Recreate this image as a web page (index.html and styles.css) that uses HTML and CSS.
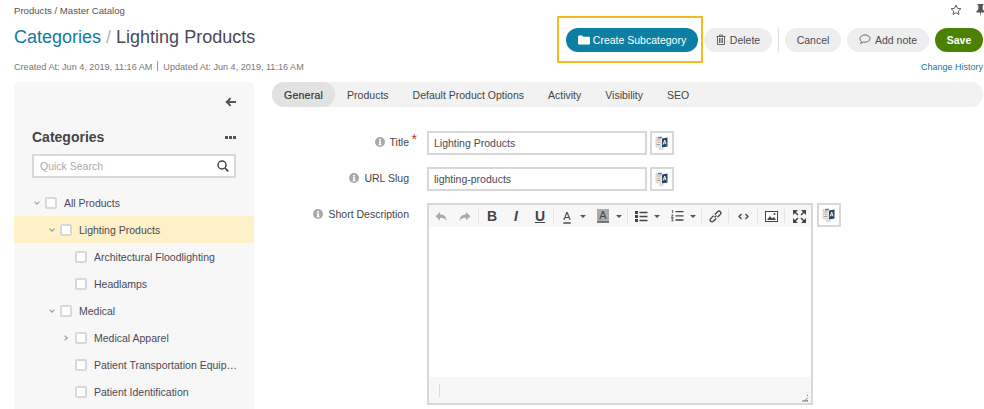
FILE: index.html
```html
<!DOCTYPE html>
<html lang="en">
<head>
    <meta charset="UTF-8">
    <title>Lighting Products</title>
    <link rel="stylesheet" href="styles.css">
</head>
<body>
    <!-- Icon sprite -->
    <svg class="sprite" width="0" height="0">
        <symbol id="i-book" viewBox="0 0 14 14">
            <path d="M1 1.500l5 1v9l-5-1z" fill="#ece8e2" stroke="#c9bba8" stroke-width=".6"/>
            <path d="M2 4h3M2.500 6.500h2.500" stroke="#d59a63" stroke-width=".9"/>
            <path d="M2 8.500h3" stroke="#7d9cc0" stroke-width=".9"/>
            <path d="M3 .8h4v1.500h-4z" fill="#4f80b5"/>
            <path d="M7 2.500l5.500-1v9l-5.500 1z" fill="#2a4568"/>
            <path d="M8.200 8.500l1.500-4.500 1.400 4.300M8.800 7h1.800" fill="none" stroke="#fff" stroke-width=".9"/>
            <path d="M4 13h4.500" stroke="#b8b8b8" stroke-width="1"/>
        </symbol>
        <symbol id="i-info" viewBox="0 0 10 10">
            <circle cx="5" cy="5" r="5" fill="#a9a9a9"/>
            <path d="M4 2h2v1.500h-2zM3.800 4.300h2.200v3h.6v.9h-3v-.9h.7v-2.100h-.5z" fill="#fff"/>
        </symbol>
    </svg>

    <header class="page-header">
        <div class="header-left">
            <div class="breadcrumb">Products / Master Catalog</div>
            <h1 class="page-title"><a class="title-link">Categories</a> <span class="title-sep">/</span> Lighting Products</h1>
            <div class="meta">Created At: Jun 4, 2019, 11:16 AM<span class="meta-sep"></span>Updated At: Jun 4, 2019, 11:16 AM</div>
        </div>
        <div class="header-right">
            <div class="top-icons">
                <svg width="12" height="12" viewBox="0 0 14 14"><path d="M7 1.300l1.700 3.700 4 .5-3 2.700.8 4-3.500-2-3.500 2 .8-4-3-2.700 4-.5z" fill="none" stroke="#555" stroke-width="1.100"/></svg>
                <svg width="9" height="13" viewBox="0 0 9 13"><path d="M1.500 0h6v1.200h-.8v4.300l1.800 1.800v1.200h-3.500l-.5 4.500-.5-4.500h-3.500v-1.200l1.800-1.800v-4.300h-.8z" fill="#555"/></svg>
            </div>
            <div class="actions">
                <div class="highlight">
                    <button class="btn btn-primary">
                        <svg width="12" height="10" viewBox="0 0 13 11"><path d="M0 1.500a1 1 0 0 1 1-1h3.500l1.200 1.500h6.300a1 1 0 0 1 1 1v6.500a1 1 0 0 1-1 1h-11a1 1 0 0 1-1-1z" fill="#fff"/></svg>
                        Create Subcategory
                    </button>
                </div>
                <button class="btn btn-delete">
                    <svg width="10" height="11" viewBox="0 0 10 11"><path d="M.5 2.500h9M3.500 2.500v-1.500h3v1.500M1.500 2.500v8h7v-8M3.500 4v5M5 4v5M6.500 4v5" fill="none" stroke="#555" stroke-width=".9"/></svg>
                    Delete
                </button>
                <span class="actions-sep"></span>
                <button class="btn btn-cancel">Cancel</button>
                <button class="btn btn-note">
                    <svg width="12" height="11" viewBox="0 0 13 12"><path d="M6.500 1c3 0 5.500 1.800 5.500 4s-2.500 4-5.500 4c-.7 0-1.300-.1-1.900-.2-.8.8-2 1.400-3.100 1.400.6-.6 1-1.300 1.100-2.100-1-.7-1.600-1.900-1.600-3.100 0-2.200 2.500-4 5.500-4z" fill="none" stroke="#555" stroke-width=".9"/></svg>
                    Add note
                </button>
                <button class="btn btn-save">Save</button>
            </div>
            <a class="history-link">Change History</a>
        </div>
    </header>

    <div class="page-body">
        <!-- Category tree -->
        <aside class="sidebar">
            <div class="sidebar-top">
                <svg width="11" height="10" viewBox="0 0 11 10"><path d="M5 .500l1.300 1.300-2 2.200h6.700v2h-6.700l2 2.200-1.300 1.300-4.700-4.500z" fill="#555"/></svg>
            </div>
            <div class="sidebar-head">
                <h2>Categories</h2>
                <span class="dots"><i></i><i></i><i></i></span>
            </div>
            <div class="search-box">
                <span>Quick Search</span>
                <svg width="12" height="12" viewBox="0 0 12 12"><circle cx="5" cy="5" r="4" fill="none" stroke="#444" stroke-width="1.500"/><path d="M8 8l3.300 3.300" stroke="#444" stroke-width="1.700"/></svg>
            </div>
            <ul class="tree">
                <li class="node level-0"><span class="chev open"></span><span class="check"></span><span class="node-name">All Products</span></li>
                <li class="node level-1 selected"><span class="chev open"></span><span class="check"></span><span class="node-name">Lighting Products</span></li>
                <li class="node level-2"><span class="chev none"></span><span class="check"></span><span class="node-name">Architectural Floodlighting</span></li>
                <li class="node level-2"><span class="chev none"></span><span class="check"></span><span class="node-name">Headlamps</span></li>
                <li class="node level-1"><span class="chev open"></span><span class="check"></span><span class="node-name">Medical</span></li>
                <li class="node level-2"><span class="chev closed"></span><span class="check"></span><span class="node-name">Medical Apparel</span></li>
                <li class="node level-2"><span class="chev none"></span><span class="check"></span><span class="node-name">Patient Transportation Equip…</span></li>
                <li class="node level-2"><span class="chev none"></span><span class="check"></span><span class="node-name">Patient Identification</span></li>
            </ul>
        </aside>

        <main class="content">
            <nav class="tabs">
                <a class="tab active">General</a>
                <a class="tab">Products</a>
                <a class="tab">Default Product Options</a>
                <a class="tab">Activity</a>
                <a class="tab">Visibility</a>
                <a class="tab">SEO</a>
            </nav>

            <form class="form">
                <div class="form-row">
                    <label class="form-label"><svg width="10" height="10"><use href="#i-info"/></svg>Title<span class="required">*</span></label>
                    <input class="text-input" type="text" value="Lighting Products">
                    <button type="button" class="translate-btn"><svg width="14" height="14"><use href="#i-book"/></svg></button>
                </div>
                <div class="form-row">
                    <label class="form-label"><svg width="10" height="10"><use href="#i-info"/></svg>URL Slug</label>
                    <input class="text-input" type="text" value="lighting-products">
                    <button type="button" class="translate-btn"><svg width="14" height="14"><use href="#i-book"/></svg></button>
                </div>
                <div class="form-row">
                    <label class="form-label"><svg width="10" height="10"><use href="#i-info"/></svg>Short Description</label>
                    <div class="editor">
                        <div class="toolbar">
                            <span class="tool"><svg width="12" height="11" viewBox="0 0 12 11"><path d="M5 1v2.500c4 0 6.300 2 6.500 6.500-1.200-2.500-3-3.300-6.500-3.300v2.800l-4.500-4.300z" fill="#aaa"/></svg></span>
                            <span class="tool"><svg width="12" height="11" viewBox="0 0 12 11"><path d="M7 1v2.500c-4 0-6.300 2-6.500 6.500 1.200-2.500 3-3.300 6.500-3.300v2.800l4.500-4.300z" fill="#aaa"/></svg></span>
                            <span class="tool-sep"></span>
                            <span class="tool tool-text bold">B</span>
                            <span class="tool tool-text italic">I</span>
                            <span class="tool tool-text underline">U</span>
                            <span class="tool-sep"></span>
                            <span class="tool-split"><span class="tool tool-text color-a">A</span><span class="caret"></span></span>
                            <span class="tool-split"><span class="tool tool-text back-a">A</span><span class="caret"></span></span>
                            <span class="tool-sep"></span>
                            <span class="tool-split"><span class="tool"><svg width="13" height="11" viewBox="0 0 13 11"><path d="M0 0h3v3h-3zM0 4h3v3h-3zM0 8h3v3h-3z" fill="#444"/><path d="M4.500 1.500h8M4.500 5.500h8M4.500 9.500h8" stroke="#444" stroke-width="1.300"/></svg></span><span class="caret"></span></span>
                            <span class="tool-split"><span class="tool"><svg width="13" height="12" viewBox="0 0 13 12"><path d="M.7.700l1-.5v3M.3 5h2l-2 2.400h2.200M.3 8.700h2l-1 1 1 1.200h-2" fill="none" stroke="#444" stroke-width=".8"/><path d="M4.500 1.700h8M4.500 5.800h8M4.500 10h8" stroke="#444" stroke-width="1.300"/></svg></span><span class="caret"></span></span>
                            <span class="tool-sep"></span>
                            <span class="tool"><svg width="13" height="13" viewBox="0 0 13 13"><path d="M5.500 7.500l2-2M4.500 5.800l-2.800 2.800a1.800 1.800 0 0 0 2.700 2.700l2.800-2.800M8.500 7.200l2.800-2.800a1.800 1.800 0 0 0-2.700-2.700l-2.800 2.800" fill="none" stroke="#444" stroke-width="1.300"/></svg></span>
                            <span class="tool-sep"></span>
                            <span class="tool tool-wide"><svg width="11" height="7" viewBox="0 0 11 7"><path d="M3.500 1l-2.500 2.500 2.500 2.500M7.500 1l2.500 2.500-2.500 2.500" fill="none" stroke="#444" stroke-width="1.300"/></svg></span>
                            <span class="tool-sep"></span>
                            <span class="tool"><svg width="13" height="11" viewBox="0 0 13 11"><path d="M0 0h13v11h-13z" fill="#444"/><path d="M1 1h11v9h-11z" fill="#fff"/><path d="M2 9l3-4 2 2.500 2-1.500 2 3z" fill="#444"/><circle cx="9.500" cy="3" r="1" fill="#444"/></svg></span>
                            <span class="tool-sep"></span>
                            <span class="tool tool-last"><svg width="13" height="13" viewBox="0 0 13 13"><path d="M0 0h5l-5 5zM13 0v5l-5-5zM0 13v-5l5 5zM13 13h-5l5-5z" fill="#444"/><path d="M2 2l3 3M11 2l-3 3M2 11l3-3M11 11l-3-3" stroke="#444" stroke-width="1.500"/></svg></span>
                        </div>
                        <div class="editor-area"></div>
                        <div class="statusbar">
                            <span class="status-mark"></span>
                            <svg class="resize-grip" width="8" height="8" viewBox="0 0 8 8"><path d="M7 1l-1 1M7 3.500l-3.500 3.500M7 6l-1 1M1 7h6" stroke="#777" stroke-width="1"/></svg>
                        </div>
                    </div>
                    <button type="button" class="translate-btn translate-editor"><svg width="14" height="14"><use href="#i-book"/></svg></button>
                </div>
            </form>
        </main>
    </div>
</body>
</html>
```

FILE: styles.css
```css
/* General Body Styles */
html, body {
    height: 409px;
    overflow: hidden;
}

body {
    margin: 0;
    padding: 0 1px 0 14px;
    font-family: 'Liberation Sans', Arial, sans-serif;
    font-size: 10.5px;
    color: #4a4a55;
    background: #ffffff;
}

.sprite {
    display: block;
    height: 0;
}

/* Header */
.page-header {
    display: flex;
    justify-content: space-between;
    height: 82px;
}

.header-left {
    display: flex;
    flex-direction: column;
}

.breadcrumb {
    margin-top: 4px;
    font-size: 9.6px;
    line-height: 13px;
    color: #555;
}

.page-title {
    margin: 9px 0 0;
    font-size: 18px;
    font-weight: 400;
    line-height: 22px;
    color: #4a4a55;
}

.title-link {
    color: #14799c;
}

.title-sep {
    color: #b5b5b5;
}

.meta {
    margin-top: 13px;
    font-size: 9.1px;
    line-height: 13px;
    color: #777;
}

.meta-sep {
    display: inline-block;
    width: 1px;
    height: 10px;
    margin: 0 5px;
    background: #999;
    vertical-align: -1px;
}

.header-right {
    display: flex;
    flex-direction: column;
    align-items: flex-end;
}

.top-icons {
    display: flex;
    gap: 14px;
    height: 16px;
    padding-top: 4px;
    margin-right: -2px;
    box-sizing: border-box;
}

.actions {
    display: flex;
    align-items: center;
    gap: 6px;
    height: 47px;
}

.highlight {
    display: flex;
    align-items: center;
    height: 47px;
    margin-right: -5px;
    padding: 0 3px 0 7px;
    border: 2px solid #f5b921;
    box-sizing: border-box;
}

.btn {
    display: flex;
    align-items: center;
    justify-content: center;
    gap: 4px;
    height: 24px;
    padding: 0;
    border: none;
    border-radius: 12px;
    font-family: inherit;
    font-size: 10.5px;
    color: #4a4a55;
    background: #eeeeee;
}

.btn-primary {
    width: 132px;
    gap: 3px;
    color: #ffffff;
    background: #0c7fa3;
}

.btn-delete {
    width: 68px;
}

.btn-cancel {
    width: 56px;
}

.btn-note {
    width: 82px;
}

.btn-save {
    width: 48px;
    font-weight: 700;
    color: #ffffff;
    background: #4b8204;
}

.actions-sep {
    width: 1px;
    height: 24px;
    background: #e2e2e2;
}

.history-link {
    margin-top: -2px;
    font-size: 9px;
    line-height: 13px;
    color: #14799c;
}

/* Page Body */
.page-body {
    display: flex;
    gap: 18px;
}

/* Sidebar */
.sidebar {
    flex: none;
    width: 240px;
    height: 327px;
    background: #f7f7f7;
    border-radius: 3px 3px 0 0;
}

.sidebar-top {
    display: flex;
    justify-content: flex-end;
    box-sizing: border-box;
    height: 25px;
    padding: 15px 18px 0 0;
}

.sidebar-head {
    display: flex;
    justify-content: space-between;
    align-items: center;
    margin-top: 20px;
    padding: 0 18px;
    height: 20px;
}

.sidebar-head h2 {
    margin: 0;
    font-size: 14px;
    font-weight: 700;
    color: #444;
}

.dots {
    display: flex;
    gap: 1px;
}

.dots i {
    width: 3px;
    height: 3px;
    background: #555;
}

.search-box {
    display: flex;
    justify-content: space-between;
    align-items: center;
    width: 204px;
    height: 24px;
    margin: 7px 0 0 18px;
    padding: 0 5px 0 6px;
    border: 2px solid #d8d8d8;
    box-sizing: border-box;
    background: #ffffff;
    color: #aaa;
}

/* Tree */
.tree {
    margin: 11px 0 0;
    padding: 0;
    list-style: none;
}

.node {
    display: flex;
    align-items: center;
    height: 27px;
}

.node.selected {
    background: #fef0c7;
}

.level-0 { padding-left: 18px; }
.level-1 { padding-left: 33px; }
.level-2 { padding-left: 48px; }

.chev {
    flex: none;
    width: 13px;
    height: 12px;
    position: relative;
}

.chev.open::before,
.chev.closed::before {
    content: "";
    position: absolute;
    width: 3px;
    height: 3px;
    border-right: 1px solid #8a9aa5;
    border-bottom: 1px solid #8a9aa5;
}

.chev.open::before {
    left: 3px;
    top: 3px;
    transform: rotate(45deg);
}

.chev.closed::before {
    left: 1px;
    top: 4px;
    transform: rotate(-45deg);
}

.check {
    flex: none;
    width: 12px;
    height: 12px;
    border: 2px solid #d8d8d8;
    border-radius: 2px;
    box-sizing: border-box;
    background: #ffffff;
}

.node-name {
    margin-left: 7px;
    white-space: nowrap;
}

/* Tabs */
.content {
    flex: 1;
    min-width: 0;
}

.tabs {
    display: flex;
    height: 25px;
    background: #f2f2f2;
    border-radius: 12px;
}

.tab {
    display: flex;
    align-items: center;
    padding: 0 12px;
    border-radius: 12px;
    color: #444;
}

.tab.active {
    padding: 0 12px;
    letter-spacing: .25px;
    color: #333;
    -webkit-text-stroke: .2px #333;
    background: #e2e2e2;
}

/* Form */
.form {
    display: flex;
    flex-direction: column;
    gap: 12px;
    margin-top: 24px;
}

.form-row {
    display: flex;
    align-items: flex-start;
    gap: 3px;
}

.form-label {
    display: flex;
    justify-content: flex-end;
    align-items: center;
    gap: 5px;
    width: 137px;
    height: 22px;
    margin-right: 15px;
    position: relative;
    color: #444;
}

.required {
    position: absolute;
    right: -8px;
    top: 0;
    font-size: 14px;
    color: #b03a2e;
}

.text-input {
    width: 220px;
    height: 24px;
    padding: 0 5px;
    border: 2px solid #d8d8d8;
    box-sizing: border-box;
    font-family: inherit;
    font-size: 10.5px;
    color: #4a4a55;
    outline: none;
}

.translate-btn {
    display: flex;
    align-items: center;
    justify-content: center;
    width: 24px;
    height: 24px;
    padding: 0;
    border: 2px solid #d8d8d8;
    box-sizing: border-box;
    background: #ffffff;
}

.translate-editor {
    margin-left: 1px;
}

/* Editor */
.editor {
    display: flex;
    flex-direction: column;
    width: 386px;
    height: 202px;
    border: 2px solid #d8d8d8;
    box-sizing: border-box;
}

.toolbar {
    display: flex;
    align-items: center;
    flex: none;
    height: 22px;
    background: #f7f7f7;
}

.tool {
    display: flex;
    align-items: center;
    justify-content: center;
    flex: none;
    width: 24px;
    height: 22px;
}

.tool-wide {
    width: 26px;
}

.tool-last {
    margin-left: 1px;
}

.tool-split {
    display: flex;
    align-items: center;
    flex: none;
    width: 36px;
}

.tool-split + .tool-split {
    width: 35px;
}

.tool-sep {
    flex: none;
    width: 1px;
    height: 14px;
    margin: 0 1px;
    background: #e2e2e2;
}

.tool-text {
    font-size: 14px;
    font-weight: 700;
    color: #444;
}

.italic {
    font-style: italic;
}

.underline {
    text-decoration: underline;
    text-underline-offset: 1px;
}

.color-a {
    font-size: 11px;
    font-weight: 400;
    text-decoration: underline 2px #777;
    text-underline-offset: 2px;
}

.back-a {
    width: 12px;
    height: 14px;
    margin: 0 6px;
    font-size: 11px;
    font-weight: 400;
    background: #aaa;
    border-bottom: 2px solid #777;
    box-sizing: border-box;
}

.caret {
    width: 0;
    height: 0;
    margin-left: 1px;
    border-top: 3px solid #555;
    border-left: 3px solid transparent;
    border-right: 3px solid transparent;
}

.editor-area {
    flex: 1;
    background: #ffffff;
}

.statusbar {
    display: flex;
    align-items: center;
    flex: none;
    height: 26px;
    padding-left: 10px;
    position: relative;
    background: #f7f7f7;
}

.status-mark {
    width: 1px;
    height: 13px;
    background: #d5dbe5;
}

.resize-grip {
    position: absolute;
    right: 2px;
    bottom: 1px;
}
```
